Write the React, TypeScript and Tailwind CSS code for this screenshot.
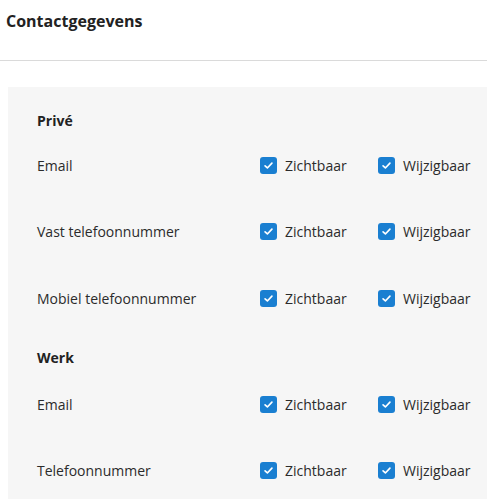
const font = { fontFamily: '"Open Sans", "Noto Sans", sans-serif' };

function Check({ label, className }: { label: string; className?: string }) {
  return (
    <label className={`flex items-center gap-2 ${className ?? ""}`}>
      <span className="flex h-[17px] w-[17px] items-center justify-center rounded-[3px] bg-[#1a7fd1]">
        <svg viewBox="0 0 16 16" className="h-[11px] w-[11px]" fill="none">
          <path d="M3 8.4 6.4 11.6 13 4.6" stroke="white" strokeWidth="2.4" strokeLinecap="round" strokeLinejoin="round" />
        </svg>
      </span>
      <span>{label}</span>
    </label>
  );
}

function Row({ label, tall }: { label: string; tall?: boolean }) {
  return (
    <div className={`flex items-center ${tall ? "h-[66.5px]" : "h-[66px]"}`}>
      <div className="w-[223px]">{label}</div>
      <Check label="Zichtbaar" className="w-[118px]" />
      <Check label="Wijzigbaar" />
    </div>
  );
}

export default function App() {
  return (
    <div className="min-h-screen bg-white text-[14px] text-[#2b2b2b]" style={font}>
      {/* Header */}
      <div className="h-[61px] border-b border-[#dadada] px-[6px] pt-[9px]">
        <h2 className="text-[16px] font-bold leading-[24px] text-[#222]">Contactgegevens</h2>
      </div>

      {/* Panel */}
      <div className="ml-2 mt-[26px] bg-[#f6f6f6] pl-[29px] pt-6 pb-4">
        <h3 className="mb-px h-5 font-bold leading-5 text-[#222]">Privé</h3>
        <Row label="Email" tall />
        <Row label="Vast telefoonnummer" tall />
        <Row label="Mobiel telefoonnummer" tall />

        <h3 className="mt-[16.5px] mb-[3px] h-5 font-bold leading-5 text-[#222]">Werk</h3>
        <Row label="Email" />
        <Row label="Telefoonnummer" />
      </div>
    </div>
  );
}
